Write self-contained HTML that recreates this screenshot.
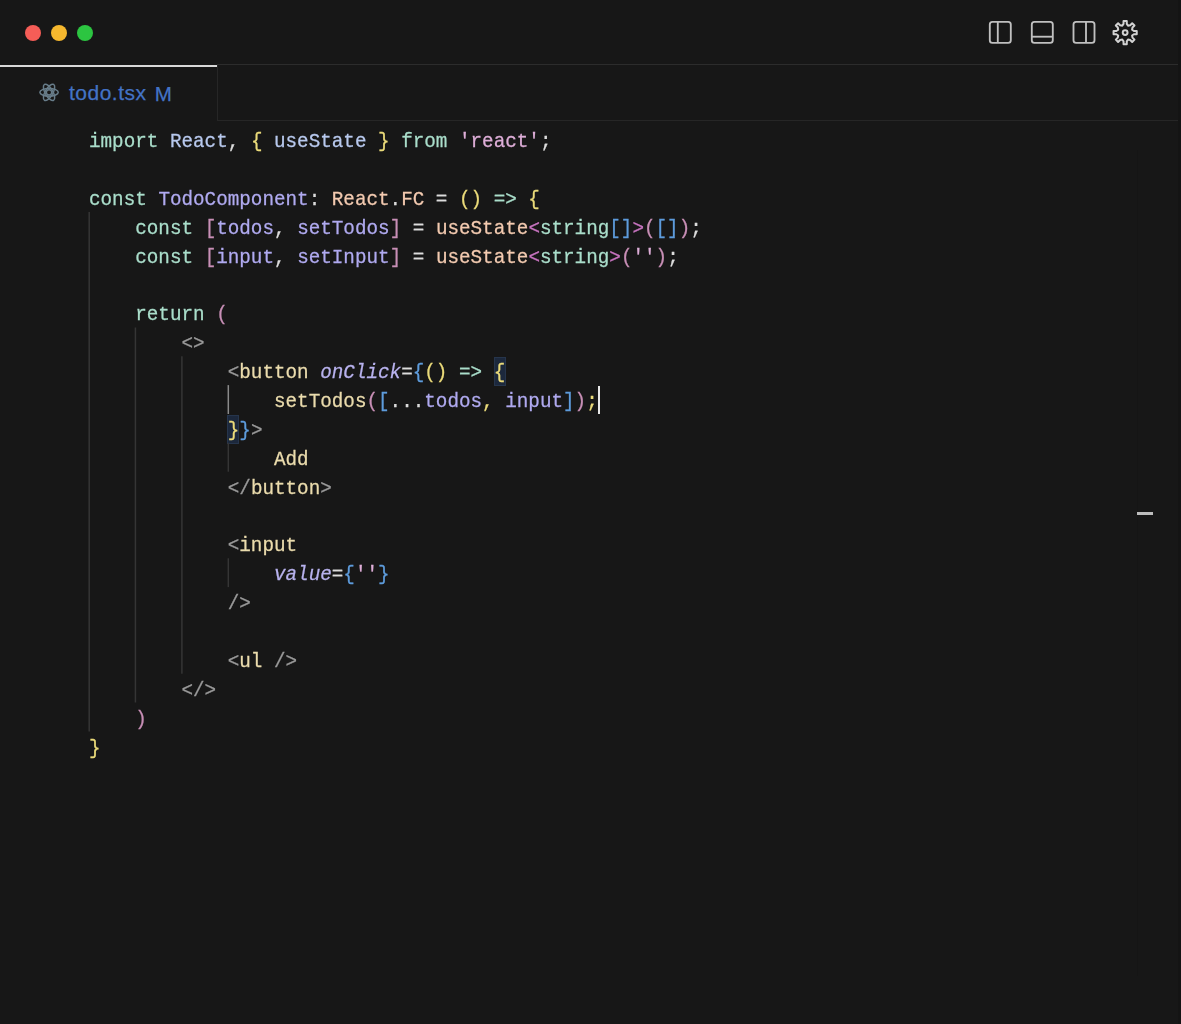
<!DOCTYPE html>
<html><head><meta charset="utf-8">
<style>
html,body{margin:0;padding:0;}
body{width:1181px;height:1024px;background:#171717;position:relative;overflow:hidden;font-family:"Liberation Sans",sans-serif;}
.dot{position:absolute;top:25.3px;width:16px;height:16px;border-radius:50%;}
.tabline{position:absolute;left:0;top:64.5px;width:217px;height:2px;background:#d8d8d8;}
.topline{position:absolute;left:217px;top:64px;width:961px;height:1px;background:#2c2c2c;}
.tabsep{position:absolute;left:217px;top:65px;width:1px;height:55px;background:#262626;}
.tabbot{position:absolute;left:217px;top:120px;width:961px;height:1px;background:#262626;}
.rstrip{position:absolute;left:1178px;top:0;width:3px;height:1024px;background:#141414;}
.ruler{position:absolute;left:1137px;top:150px;width:1.2px;height:826px;background:#151515;}
.rmark{position:absolute;left:1137px;top:512px;width:16px;height:3px;background:#bdbdbd;}
.tabtxt{position:absolute;left:69px;top:80.8px;font-size:21px;line-height:24px;letter-spacing:0.5px;color:#4373c6;white-space:pre;-webkit-text-stroke:0.25px currentColor;}
.code{position:absolute;left:88.7px;top:128.1px;font-family:"Liberation Mono",monospace;font-size:19.28px;line-height:28.9px;color:#d8d8d8;-webkit-text-stroke:0.25px currentColor;will-change:transform;}
.code div{height:28.9px;white-space:pre;transform:scaleY(1.09);transform-origin:0 19.6px;}
.guide{position:absolute;width:1px;background:#383838;}
.k{color:#aadecb}
.i{color:#b8c9ee}
.y{color:#ebdb7a}
.s{color:#deaed8}
.w{color:#dcdcdc}
.p{color:#b0aaf0}
.o{color:#f3cab0}
.pk{color:#c88fb6}
.ag{color:#c874c0}
.bl{color:#5e9cdc}
.g{color:#9a9a9a}
.t{color:#ebdcad}
.it{font-style:italic;color:#b8b2ee}
.cursor{position:absolute;left:598px;top:386px;width:2.2px;height:28px;background:#e8e8e8;}
.bm{position:absolute;background:#1c283c;box-shadow:inset 0 0 0 1px #26354c;}
</style></head><body>
<div class="dot" style="left:25.4px;background:#f55d57"></div>
<div class="dot" style="left:51.3px;background:#f6b82e"></div>
<div class="dot" style="left:76.7px;background:#2cc541"></div>

<div class="topline"></div>
<div class="tabline"></div>
<div class="tabsep"></div>
<div class="tabbot"></div>
<div class="rstrip"></div>
<div class="ruler"></div>
<div class="rmark"></div>

<!-- bracket match boxes -->
<div class="bm" style="left:494px;top:357px;width:11.5px;height:28.5px"></div>
<div class="bm" style="left:227px;top:415px;width:11.5px;height:28.5px"></div>

<div class="tabtxt">todo.tsx</div><div class="tabtxt" style="left:154.8px;top:81.6px;letter-spacing:0;font-size:20.6px;">M</div>
<svg style="position:absolute;left:0;top:0" width="1181" height="1024" viewBox="0 0 1181 1024">
<g fill="none" stroke="#c0c0c0" stroke-width="1.85">
<rect x="989.8" y="21.8" width="21" height="21" rx="2.6"/>
<line x1="997.8" y1="22" x2="997.8" y2="42.8"/>
<rect x="1031.8" y="21.9" width="21" height="21" rx="2.6"/>
<line x1="1032" y1="36.7" x2="1052.6" y2="36.7"/>
<rect x="1073.5" y="21.9" width="21" height="21" rx="2.6"/>
<line x1="1086" y1="22" x2="1086" y2="42.8"/>
</g>
<g fill="none" stroke="#d2d2d2" stroke-width="2">
<path stroke-linejoin="round" d="M1123.52 23.85 L1123.52 21.01 L1126.78 21.01 L1126.78 23.85 L1128.02 25.67 L1130.19 25.26 L1132.19 23.26 L1134.49 25.56 L1132.49 27.56 L1132.08 29.73 L1133.90 30.97 L1136.74 30.97 L1136.74 34.23 L1133.90 34.23 L1132.08 35.47 L1132.49 37.64 L1134.49 39.64 L1132.19 41.94 L1130.19 39.94 L1128.02 39.53 L1126.78 41.35 L1126.78 44.19 L1123.52 44.19 L1123.52 41.35 L1122.28 39.53 L1120.11 39.94 L1118.11 41.94 L1115.81 39.64 L1117.81 37.64 L1118.22 35.47 L1116.40 34.23 L1113.56 34.23 L1113.56 30.97 L1116.40 30.97 L1118.22 29.73 L1117.81 27.56 L1115.81 25.56 L1118.11 23.26 L1120.11 25.26 L1122.28 25.67 Z"/>
<circle cx="1125.15" cy="32.6" r="2.4"/>
</g>
<g fill="none" stroke="#687d8a" stroke-width="1.5" transform="translate(49.05 92.35)">
<ellipse rx="9.2" ry="3.8"/>
<ellipse rx="9.2" ry="3.8" transform="rotate(60)"/>
<ellipse rx="9.2" ry="3.8" transform="rotate(120)"/>
<circle r="2.7" fill="#171717"/>
</g>
<g stroke-width="1.5">
<line x1="89.2" y1="212.0" x2="89.2" y2="731.5" stroke="#353535"/>
<line x1="135.4" y1="327.4" x2="135.4" y2="702.6" stroke="#353535"/>
<line x1="181.9" y1="356.3" x2="181.9" y2="673.8" stroke="#353535"/>
<line x1="228.3" y1="385.1" x2="228.3" y2="414.0" stroke="#8a8a8a"/>
<line x1="228.3" y1="442.8" x2="228.3" y2="471.7" stroke="#353535"/>
<line x1="228.3" y1="558.3" x2="228.3" y2="587.1" stroke="#353535"/>
</g>
</svg>


<div class="code">
<div><span class="k">import</span> <span class="i">React</span><span class="w">,</span> <span class="y">{</span> <span class="i">useState</span> <span class="y">}</span> <span class="k">from</span> <span class="s">'react'</span><span class="w">;</span></div>
<div> </div>
<div><span class="k">const</span> <span class="p">TodoComponent</span><span class="w">:</span> <span class="o">React</span><span class="w">.</span><span class="o">FC</span> <span class="w">=</span> <span class="y">()</span> <span class="k">=&gt;</span> <span class="y">{</span></div>
<div>    <span class="k">const</span> <span class="pk">[</span><span class="p">todos</span><span class="w">,</span> <span class="p">setTodos</span><span class="pk">]</span> <span class="w">=</span> <span class="o">useState</span><span class="ag">&lt;</span><span class="k">string</span><span class="bl">[]</span><span class="ag">&gt;</span><span class="pk">(</span><span class="bl">[]</span><span class="pk">)</span><span class="w">;</span></div>
<div>    <span class="k">const</span> <span class="pk">[</span><span class="p">input</span><span class="w">,</span> <span class="p">setInput</span><span class="pk">]</span> <span class="w">=</span> <span class="o">useState</span><span class="ag">&lt;</span><span class="k">string</span><span class="ag">&gt;</span><span class="pk">(</span><span class="s">''</span><span class="pk">)</span><span class="w">;</span></div>
<div> </div>
<div>    <span class="k">return</span> <span class="pk">(</span></div>
<div>        <span class="g">&lt;&gt;</span></div>
<div>            <span class="g">&lt;</span><span class="t">button</span> <span class="it">onClick</span><span class="w">=</span><span class="bl">{</span><span class="y">()</span> <span class="k">=&gt;</span> <span class="y">{</span></div>
<div>                <span class="t">setTodos</span><span class="pk">(</span><span class="bl">[</span><span class="w">...</span><span class="p">todos</span><span class="y">,</span> <span class="p">input</span><span class="bl">]</span><span class="pk">)</span><span class="y">;</span></div>
<div>            <span class="y">}</span><span class="bl">}</span><span class="g">&gt;</span></div>
<div>                <span class="t">Add</span></div>
<div>            <span class="g">&lt;/</span><span class="t">button</span><span class="g">&gt;</span></div>
<div> </div>
<div>            <span class="g">&lt;</span><span class="t">input</span></div>
<div>                <span class="it">value</span><span class="w">=</span><span class="bl">{</span><span class="s">''</span><span class="bl">}</span></div>
<div>            <span class="g">/&gt;</span></div>
<div> </div>
<div>            <span class="g">&lt;</span><span class="t">ul</span> <span class="g">/&gt;</span></div>
<div>        <span class="g">&lt;/&gt;</span></div>
<div>    <span class="pk">)</span></div>
<div><span class="y">}</span></div>
</div>

<div class="cursor"></div>
</body></html>
